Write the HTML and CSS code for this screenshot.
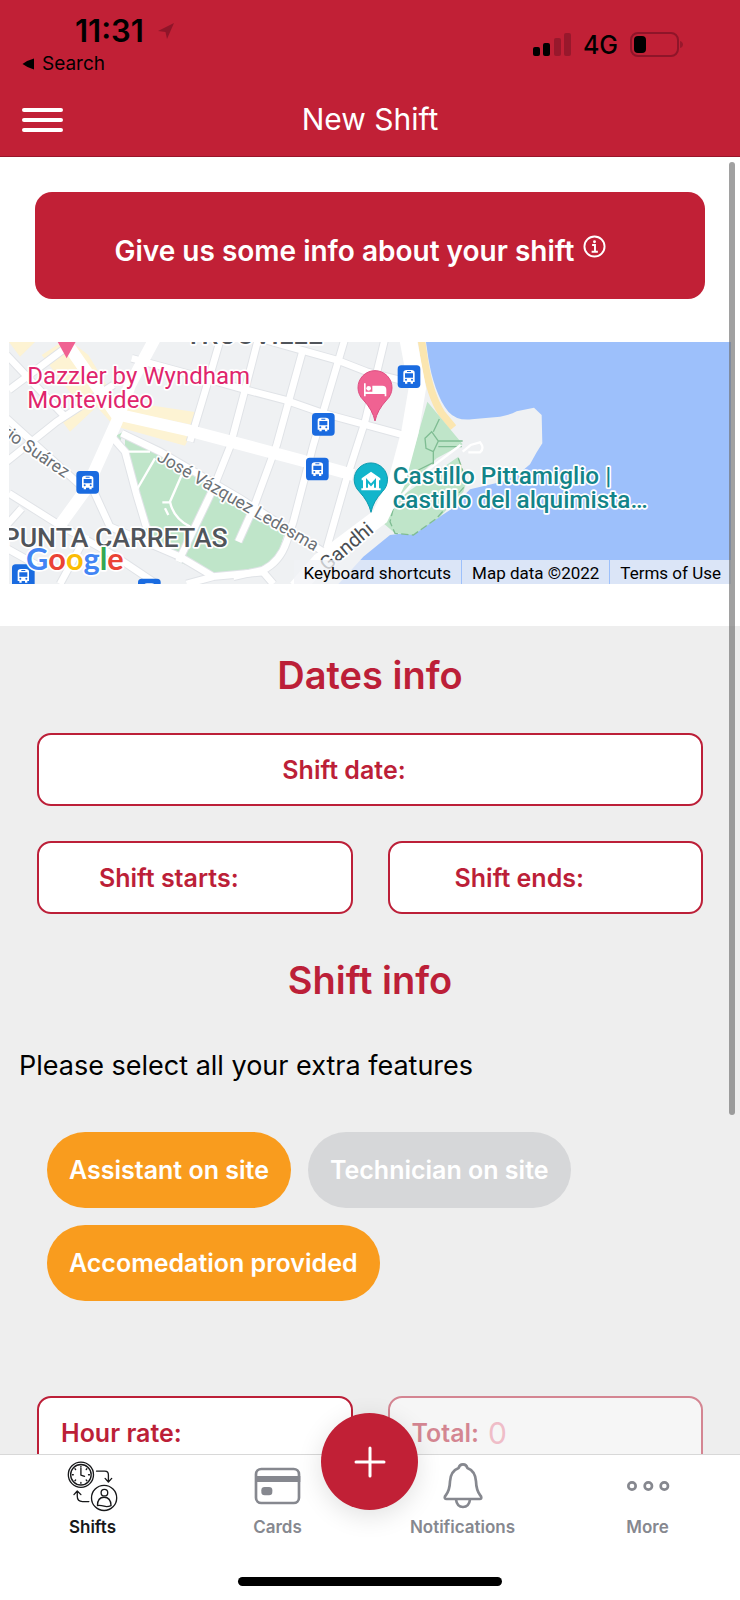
FILE: index.html
```html
<!DOCTYPE html>
<html lang="en">
<head>
  <meta charset="UTF-8">
  <meta name="viewport" content="width=device-width, initial-scale=1.0">
  <title>New Shift</title>
  <link rel="stylesheet" href="styles.css">
</head>
<body>
  <div class="app">
    <header class="header">
      <div class="status-bar">
        <div class="status-left">
          <div class="clock">
            <span>11:31</span>
            <svg class="location-icon" viewBox="0 0 18 18"><path d="M1 9 17 1 10 17 8.500 10Z"/></svg>
          </div>
          <a class="back-link" href="#">
            <svg viewBox="0 0 13 12"><path d="M12 0.500v11Q6 10 0.500 6 6 2 12 0.500Z"/></svg>
            Search
          </a>
        </div>
        <div class="status-right">
          <svg class="signal" viewBox="0 0 38 24">
            <rect x="0" y="14" width="7" height="9" rx="2"/>
            <rect x="10" y="10" width="7" height="13" rx="2"/>
            <rect class="dim" x="21" y="5" width="7" height="18" rx="2"/>
            <rect class="dim" x="31" y="0" width="7" height="23" rx="2"/>
          </svg>
          <span>4G</span>
          <svg class="battery" viewBox="0 0 54 26">
            <rect class="shell" x="1" y="1" width="47" height="23" rx="7"/>
            <rect x="4" y="4" width="12" height="17" rx="4"/>
            <path class="dim" d="M50 9c4 1 4 6 0 7Z"/>
          </svg>
        </div>
      </div>
      <div class="nav-bar">
        <button class="menu-btn" aria-label="Menu"><span></span><span></span><span></span></button>
        <h1>New Shift</h1>
      </div>
    </header>

    <div class="content">
      <main class="scroll-area">
        <section class="intro">
          <button class="info-btn">
            Give us some info about your shift
            <svg viewBox="0 0 24 24"><circle cx="12" cy="12" r="10.500"/><path d="M9.500 10.500H12.500V17M9 17.500H15.500"/><circle class="dot" cx="12" cy="7" r="1.500"/></svg>
          </button>
        </section>

        <section class="map">
          <svg class="map-canvas" viewBox="27 21 2166 726" preserveAspectRatio="xMinYMid slice">
            <defs>
              <g id="bus">
                <rect width="68" height="68" rx="11" fill="#1a6be0"/>
                <path d="M17 50V22q0-8 10-8h14q10 0 10 8v28h-5v5h-7v-5H29v5h-7v-5Z" fill="#fff"/>
                <path d="M22 24h24v13H22ZM28 17h12v3H28Z" fill="#1a6be0"/>
                <circle cx="25" cy="43" r="3" fill="#1a6be0"/><circle cx="43" cy="43" r="3" fill="#1a6be0"/>
              </g>
            </defs>
            <rect x="0" y="0" width="2240" height="780" fill="#eff1f3"/>

            <!-- sea -->
            <path fill="#9dc0fb" d="M1275 0 1285 70C1295 130 1315 195 1345 230Q1370 258 1415 253L1500 245Q1530 240 1550 229L1602 218 1625 240 1627 325 1610 352 1590 388Q1550 425 1500 442L1410 463 1350 525 1250 590 1170 600 1090 665 985 780H2240V0Z"/>
            <path fill="none" stroke="#fbe6b0" stroke-width="22" d="M1262 0 1274 80Q1290 180 1325 235L1360 278"/>

            <!-- commercial blocks -->
            <g fill="#fdf3d3">
              <path d="M27 21H105L60 65ZM125 60 180 25 380 245 340 270 290 215 210 290 180 250 235 205ZM215 21 265 60 350 200 375 215 330 235 205 45Z"/>
              <path d="M380 200 590 232 580 270 375 228ZM370 250 570 302 555 332 362 278Z"/>
            </g>

            <!-- parks -->
            <g fill="#bfe5c9">
              <path d="M342 305 370 290 358 328ZM375 310 480 360 560 410 855 590 840 640Q820 675 790 695L700 715H620L535 680 430 590 410 480 375 350Z"/>
              <path d="M1282 200 1388 328 1310 370 1200 480 1245 330Z"/>
              <path d="M1375 365 1400 440 1390 470 1320 545 1240 600 1185 595 1150 565 1210 480Z"/>
            </g>
            <g fill="none" stroke="#7fbd93" stroke-width="4">
              <path d="M1318 252 1300 290M1275 310 1295 290 1315 318 1300 350 1278 340ZM1300 350V390M1255 405 1300 383M1315 318H1388M1315 335H1385"/>
              <path stroke-dasharray="22 10" d="M1375 370 1402 445 1310 550 1240 600 1185 595 1170 560 1180 520"/>
            </g>

            <!-- streets, casing then fill -->
            <g fill="none" stroke="#e0e3e7" stroke-width="26">
              <path d="M27 165 215 25M20 60 190 240M20 380 170 260 340 150M27 475 170 565 340 660 470 747M20 570 65 520M20 640 110 690"/>
              <path d="M20 250 240 450M275 455 330 575 540 665 640 725 800 710M340 310 375 350 410 480 440 580"/>
              <path d="M365 295 480 350 720 490 985 660"/>
              <path d="M395 70 560 115 740 165 855 195 970 235 1210 300M780 10 850 30 1010 75 1100 110 1220 140"/>
              <path d="M665 0 630 120 570 320M775 10 735 165 690 335 640 460 535 680M910 40 830 330 760 520 715 620"/>
              <path d="M1035 10 940 330 880 560 860 620Q840 680 790 705L700 725M1155 10 1095 260 1040 430 980 640M260 600 180 747M640 725 560 747M780 700 820 747"/>
            </g>
            <g fill="none" stroke="#fff" stroke-width="20">
              <path d="M27 165 215 25M20 60 190 240M20 380 170 260 340 150M27 475 170 565 340 660 470 747M20 570 65 520M20 640 110 690"/>
              <path d="M20 250 240 450M275 455 330 575 540 665 640 725 800 710M340 310 375 350 410 480 440 580"/>
              <path d="M365 295 480 350 720 490 985 660"/>
              <path d="M395 70 560 115 740 165 855 195 970 235 1210 300M780 10 850 30 1010 75 1100 110 1220 140"/>
              <path d="M665 0 630 120 570 320M775 10 735 165 690 335 640 460 535 680M910 40 830 330 760 520 715 620"/>
              <path d="M1035 10 940 330 880 560 860 620Q840 680 790 705L700 725M1155 10 1095 260 1040 430 980 640M260 600 180 747M640 725 560 747M780 700 820 747"/>
            </g>
            <g fill="none" stroke="#fff" stroke-width="7">
              <path d="M375 350H450M465 370 410 465M545 420 510 500Q520 550 570 575M487 502H512M495 520 505 540"/>
              <path d="M1382 330 1250 430 1200 490M1388 350 1412 330 1440 322Q1455 340 1440 352L1405 352"/>
            </g>
            <g fill="none" stroke="#fff" stroke-width="36">
              <path d="M465 10 390 150 350 260 260 460 180 570M360 240 560 285 750 335 900 375 1060 420M200 25 350 240"/>
              <path stroke-width="52" d="M1222 0 1252 160 1230 290 1190 440 1140 545 960 680 890 760"/>
            </g>

            <!-- bus stops -->
            <use href="#bus" x="229" y="408"/>
            <use href="#bus" x="36" y="688"/>
            <use href="#bus" x="414" y="731"/>
            <use href="#bus" x="1193" y="91"/>
            <use href="#bus" x="936" y="234"/>
            <use href="#bus" x="918" y="368"/>

            <!-- pins -->
            <path fill="#f06292" d="M170 15h60L200 70Z"/>
            <path fill="#f06292" stroke="#dd4d80" stroke-width="3" d="M1125 258Q1118 225 1090 195A51 51 0 1 1 1160 195Q1132 225 1125 258Z"/>
            <path fill="#fff" d="M1092 145h5v25h20v-18h30q12 0 12 12v20h-5v-7h-57v7h-5Z"/><circle cx="1106" cy="160" r="7" fill="#fff"/>
            <path fill="#12b5cb" stroke="#0d9aae" stroke-width="3" d="M1113 532Q1106 500 1078 470A50 50 0 1 1 1147 470Q1119 500 1113 532Z"/>
            <path fill="#fff" d="M1113 410 1141 430V436H1137V460H1142V466H1084V460H1089V436H1085V430Z"/>
            <path fill="none" stroke="#12b5cb" stroke-width="6" d="M1101 458V437L1113 450 1125 437V458"/>

            <!-- place names -->
            <g class="place">
              <text class="area" x="556" y="27">TROUVILLE</text>
              <text class="area" x="8" y="637">PUNTA CARRETAS</text>
              <text class="street" transform="translate(4 298) rotate(35)">rio Suárez</text>
              <text class="street" transform="translate(468 375) rotate(30)">José Vázquez Ledesma</text>
              <text class="street road" transform="translate(980 710) rotate(-40)">Gandhi</text>
              <text class="hotel" x="82" y="148">Dazzler by Wyndham</text>
              <text class="hotel" x="82" y="220">Montevideo</text>
              <text class="museum" x="1178" y="447">Castillo Pittamiglio |</text>
              <text class="museum" x="1178" y="519">castillo del alquimista…</text>
              <text class="google" x="78" y="705"><tspan fill="#4285f4">G</tspan><tspan fill="#ea4335">o</tspan><tspan fill="#fbbc05">o</tspan><tspan fill="#4285f4">g</tspan><tspan fill="#34a853">l</tspan><tspan fill="#ea4335">e</tspan></text>
            </g>
          </svg>
          <div class="map-legal">
            <button>Keyboard shortcuts</button>
            <span>Map data ©2022</span>
            <a href="#">Terms of Use</a>
          </div>
        </section>

        <form class="shift-form">
          <h2>Dates info</h2>
          <label class="field">Shift date: <input type="text" name="date"></label>
          <div class="field-row">
            <label class="field">Shift starts: <input type="text" name="starts"></label>
            <label class="field">Shift ends: <input type="text" name="ends"></label>
          </div>

          <h2>Shift info</h2>
          <p class="hint">Please select all your extra features</p>
          <div class="chips">
            <button type="button" class="chip active">Assistant on site</button>
            <button type="button" class="chip">Technician on site</button>
            <button type="button" class="chip active">Accomedation provided</button>
          </div>

          <div class="field-row">
            <label class="field amount">Hour rate: <input type="text" name="rate"></label>
            <label class="field amount disabled">Total: <input type="text" name="total" value="0" disabled></label>
          </div>
        </form>
      </main>
      <div class="scroll-thumb"></div>
    </div>

    <nav class="tab-bar">
      <a class="tab current" href="#">
        <svg class="shifts-icon" viewBox="200 238 160 156">
          <circle cx="245" cy="282" r="38"/><circle cx="245" cy="282" r="31"/>
          <path d="M245 262V283L256 287M245 256V259M245 305V308M219 282H222M268 282H271M227 264 229 266M263 264 261 266M227 300 229 298M263 300 261 298"/>
          <path d="M292 271H317Q328 271 328 282V303M318 293 328 304 338 293M269 363H250Q234 363 234 347V332M224 342 234 331 245 342"/>
          <circle cx="315" cy="352" r="38"/><circle cx="316" cy="336" r="10"/>
          <path d="M295 375Q295 350 315 350T336 375Q325 380 315 377T295 375Z"/>
        </svg>
        Shifts
      </a>
      <a class="tab" href="#">
        <svg class="cards-icon" viewBox="762 258 147 120">
          <rect x="771" y="267" width="129" height="102" rx="16"/>
          <path class="solid" d="M768 288H904V306H768Z"/>
          <rect class="solid" x="787" y="321" width="33" height="25" rx="10"/>
        </svg>
        Cards
      </a>
      <button class="fab" aria-label="Add shift"><svg viewBox="0 0 32 32"><path d="M16 2V30M2 16H30"/></svg></button>
      <a class="tab" href="#">
        <svg class="bell-icon" viewBox="214 242 132 150">
          <path d="M280 252Q269 252 267 263Q243 272 241 303C240 333 233 338 226 348Q223 356 231 356H330Q337 356 334 348C327 338 320 333 319 303Q317 272 293 263Q291 252 280 252ZM259 358Q262 380 280 380T301 358"/>
        </svg>
        Notifications
      </a>
      <a class="tab" href="#">
        <svg class="more-icon" viewBox="768 299 132 36">
          <circle cx="786" cy="317" r="11"/><circle cx="835" cy="317" r="11"/><circle cx="883" cy="317" r="11"/>
        </svg>
        More
      </a>
    </nav>
    <div class="home-indicator"></div>
  </div>
</body>
</html>
```
FILE: styles.css
```css
* {
  box-sizing: border-box;
}
body {
  margin: 0;
  font-family: Inter, Roboto, sans-serif;
  color: #000;
  background: #fff;
}
button, input {
  font: inherit;
  color: inherit;
  border: none;
  background: none;
  padding: 0;
}
button {
  cursor: pointer;
}
a {
  color: inherit;
  text-decoration: none;
}
.app {
  height: 100vh;
  display: flex;
  flex-direction: column;
}

/* header */
.header {
  background: #c12036;
  border-bottom: 1px solid #98152a;
}
.status-bar {
  display: flex;
  justify-content: space-between;
  padding: 11px 56px 4px 22px;
}
.clock {
  display: flex;
  align-items: center;
  gap: 13px;
  padding-left: 53px;
  font-size: 31px;
  line-height: 40px;
  font-weight: 600;
}
.location-icon {
  width: 18px;
  height: 18px;
  fill: #8f1529;
}
.back-link {
  display: flex;
  align-items: center;
  gap: 7px;
  font-size: 19px;
  line-height: 26px;
}
.back-link svg {
  width: 13px;
  height: 12px;
}
.status-right {
  display: flex;
  align-items: center;
  gap: 12px;
  padding-top: 2px;
  font-size: 25px;
  font-weight: 500;
}
.signal {
  width: 38px;
  height: 24px;
}
.battery {
  width: 54px;
  height: 26px;
}
.dim {
  fill: #98182c;
}
.shell {
  fill: none;
  stroke: #8f1529;
  stroke-width: 2;
}
.nav-bar {
  display: grid;
  grid-template-columns: 1fr auto 1fr;
  align-items: center;
  height: 75px;
  padding: 0 22px;
}
.nav-bar h1 {
  margin: 0;
  color: #fff;
  font-size: 30px;
  font-weight: 400;
}
.menu-btn {
  display: flex;
  flex-direction: column;
  gap: 6px;
  width: 41px;
  padding-top: 3px;
}
.menu-btn span {
  height: 4px;
  border-radius: 2px;
  background: #fff;
}

/* page */
.content {
  position: relative;
  flex: 1;
  min-height: 0;
}
.scroll-area {
  height: 100%;
  overflow-y: auto;
  scrollbar-width: none;
}
.scroll-thumb {
  position: absolute;
  top: 5px;
  right: 5px;
  width: 6px;
  height: 73.5%;
  border-radius: 3px;
  background: rgba(110, 110, 110, 0.65);
}
.intro {
  padding: 35px 35px 43px;
}
.info-btn {
  display: flex;
  align-items: center;
  justify-content: center;
  gap: 8px;
  width: 100%;
  padding: 40px 36px 28px 16px;
  border-radius: 17px;
  background: #c12036;
  color: #fff;
  font-size: 28px;
  line-height: 39px;
  font-weight: 600;
}
.info-btn svg {
  width: 23px;
  height: 23px;
  margin-bottom: 10px;
  fill: none;
  stroke: #fff;
  stroke-width: 2;
}
.info-btn .dot {
  fill: #fff;
  stroke: none;
}

/* map */
.map {
  position: relative;
  margin: 0 9px 42px;
  font-family: Roboto, sans-serif;
}
.map-canvas {
  display: block;
  width: 100%;
  height: 242px;
}
.place text {
  paint-order: stroke;
  stroke: #fff;
  stroke-width: 10px;
  stroke-linejoin: round;
}
.place .area {
  font-size: 80px;
  fill: #50545a;
  font-weight: 500;
}
.place .street {
  font-size: 52px;
  fill: #6b7075;
}
.place .road {
  font-size: 60px;
  fill: #4a4e52;
}
.place .hotel {
  font-size: 72px;
  fill: #e0256c;
}
.place .museum {
  font-size: 73px;
  font-weight: 500;
  fill: #128489;
}
.place .google {
  font-family: Lato, sans-serif;
  font-size: 92px;
  font-weight: 700;
}
.map-legal {
  position: absolute;
  right: 0;
  bottom: 0;
  display: flex;
  gap: 1px;
  font-size: 17px;
}
.map-legal > * {
  padding: 2px 10px 0;
  line-height: 22px;
  background: rgba(240, 242, 245, 0.75);
}

/* form */
.shift-form {
  padding: 25px 37px 40px;
  background: #eee;
}
.shift-form h2 {
  margin: 0;
  color: #bc1f38;
  font-size: 38px;
  line-height: 48px;
  font-weight: 600;
  text-align: center;
}
.field {
  display: flex;
  flex: 1;
  align-items: center;
  justify-content: center;
  height: 73px;
  border: 2px solid #bc1f38;
  border-radius: 14px;
  background: #fff;
  color: #bc1f38;
  font-size: 25px;
  font-weight: 600;
}
.shift-form > .field {
  margin: 34px 0 35px;
}
.field input {
  width: 52px;
}
.field-row {
  display: flex;
  gap: 35px;
  margin-bottom: 42px;
}
.field-row .amount {
  justify-content: flex-start;
  padding-left: 22px;
}
.field.amount input {
  width: 100px;
  margin-left: 9px;
  color: #f18ea3;
  font-size: 30px;
  font-weight: 400;
}
.disabled {
  opacity: 0.5;
}
.hint {
  margin: 44px -18px 48px;
  font-size: 27px;
  line-height: 36px;
}
.chips {
  display: flex;
  flex-wrap: wrap;
  gap: 17px;
  padding: 0 10px;
  margin-bottom: 95px;
}
.chip {
  height: 76px;
  padding: 0 22px;
  border-radius: 38px;
  background: #d6d7d9;
  color: #fff;
  font-size: 25px;
  font-weight: 600;
}
.chip.active {
  background: #f99c1e;
}

/* bottom tabs */
.tab-bar {
  position: relative;
  display: grid;
  grid-template-columns: repeat(4, 1fr);
  padding: 5px 0 35px;
  border-top: 1px solid #d8d8d8;
  background: #fff;
}
.tab {
  display: grid;
  grid-template-rows: 52px 30px;
  align-items: center;
  justify-items: center;
  color: #86888f;
  font-size: 17px;
  font-weight: 600;
}
.tab.current {
  color: #17181a;
}
.tab svg {
  fill: none;
  stroke: currentColor;
  stroke-width: 8;
  stroke-linecap: round;
  stroke-linejoin: round;
}
.tab .solid {
  fill: currentColor;
  stroke: none;
}
.tab .shifts-icon {
  width: 53px;
  height: 52px;
  stroke-width: 4;
}
.cards-icon {
  width: 49px;
  height: 40px;
}
.bell-icon {
  width: 44px;
  height: 50px;
}
.more-icon {
  width: 44px;
  height: 12px;
}
.fab {
  position: absolute;
  top: -42px;
  left: 50%;
  display: flex;
  align-items: center;
  justify-content: center;
  width: 97px;
  height: 97px;
  margin-left: -49px;
  border-radius: 50%;
  background: #c12036;
  box-shadow: 0 6px 26px rgba(0, 0, 0, 0.12);
}
.fab svg {
  width: 32px;
  height: 32px;
  fill: none;
  stroke: #fff;
  stroke-width: 3;
  stroke-linecap: round;
}
.home-indicator {
  width: 264px;
  height: 9px;
  margin: 0 auto 14px;
  border-radius: 5px;
  background: #000;
}
```
